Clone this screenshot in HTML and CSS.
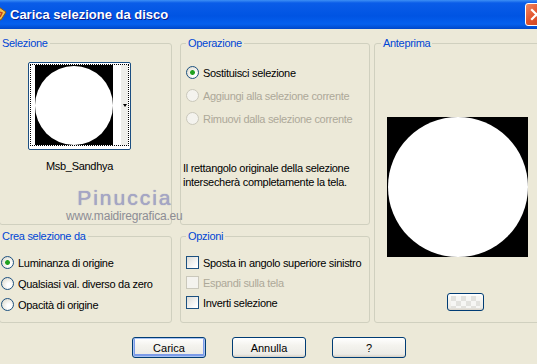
FILE: index.html
```html
<!DOCTYPE html>
<html lang="it">
<head>
    <meta charset="UTF-8">
    <title>Carica selezione da disco</title>
    <link rel="stylesheet" href="styles.css">
</head>
<body>
<div class="dialog">
    <div class="titlebar">
        <span class="app-icon">
            <svg width="16" height="16" viewBox="0 0 16 16">
                <path d="M2 3 L7 1 L14 6 L9 14 L3 12 Z" fill="#f3c04b" stroke="#8a5a12" stroke-width="1"/>
                <path d="M5 5 L10 7 L8 11" fill="none" stroke="#c6421c" stroke-width="1.5"/>
            </svg>
        </span>
        <span class="title">Carica selezione da disco</span>
        <span class="close">
            <svg width="21" height="21" viewBox="0 0 21 21">
                <path d="M6 6 L15 15 M15 6 L6 15" stroke="#fff" stroke-width="2.2" stroke-linecap="square"/>
            </svg>
        </span>
    </div>

    <div class="content">
        <div class="groups">
            <fieldset class="group sel-group">
                <legend>Selezione</legend>
                <div class="thumb-wrap">
                    <div class="thumb">
                        <div class="thumb-inner">
                            <div class="thumb-img"><div class="circle"></div></div>
                            <div class="thumb-strip"><span class="arrow"></span></div>
                        </div>
                    </div>
                    <div class="thumb-name">Msb_Sandhya</div>
                </div>
            </fieldset>

            <fieldset class="group op-group">
                <legend>Operazione</legend>
                <div class="rows op-rows">
                    <label class="row"><input type="radio" name="op" checked> Sostituisci selezione</label>
                    <label class="row disabled"><input type="radio" name="op" disabled> Aggiungi alla selezione corrente</label>
                    <label class="row disabled"><input type="radio" name="op" disabled> Rimuovi dalla selezione corrente</label>
                </div>
                <p class="note">Il rettangolo originale della selezione<br>intersecherà completamente la tela.</p>
            </fieldset>

            <fieldset class="group preview-group">
                <legend>Anteprima</legend>
                <div class="preview"><div class="circle"></div></div>
                <button class="btn small-btn"><span class="checker"></span></button>
            </fieldset>

            <fieldset class="group crea-group">
                <legend>Crea selezione da</legend>
                <div class="rows crea-rows">
                    <label class="row"><input type="radio" name="src" checked> Luminanza di origine</label>
                    <label class="row"><input type="radio" name="src"> Qualsiasi val. diverso da zero</label>
                    <label class="row"><input type="radio" name="src"> Opacità di origine</label>
                </div>
            </fieldset>

            <fieldset class="group opt-group">
                <legend>Opzioni</legend>
                <div class="rows opt-rows">
                    <label class="row"><input type="checkbox"> Sposta in angolo superiore sinistro</label>
                    <label class="row disabled"><input type="checkbox" disabled> Espandi sulla tela</label>
                    <label class="row"><input type="checkbox"> Inverti selezione</label>
                </div>
            </fieldset>

            <div class="watermark">
                <span class="wm-name">Pinuccia</span>
                <span class="wm-url">www.maidiregrafica.eu</span>
            </div>
        </div>

        <div class="buttons">
            <button class="btn default">Carica</button>
            <button class="btn">Annulla</button>
            <button class="btn">?</button>
        </div>
    </div>
</div>
</body>
</html>
```

FILE: styles.css
```css
body {
    margin: 0;
    background: #ece9d8;
    font-family: "Liberation Sans", Arial, sans-serif;
    font-size: 11px;
    letter-spacing: -0.3px;
    color: #000;
    overflow: hidden;
}
.dialog {
    width: 537px;
    height: 364px;
    overflow: hidden;
    position: relative;
}
.titlebar {
    height: 29px;
    display: flex;
    align-items: center;
    background: linear-gradient(#3d8ff5 0px, #0a5ce8 3px, #0054e3 16px, #0560ee 24px, #0047c9 29px);
}
.app-icon {
    margin-left: -8px;
    width: 16px;
    height: 16px;
    margin-top: -2px;
}
.title {
    margin-left: 2px;
    color: #fff;
    font-weight: bold;
    font-size: 13px;
    letter-spacing: 0;
    text-shadow: 1px 1px 0 #0a1a8a;
    flex: 1;
}
.close {
    width: 21px;
    height: 21px;
    margin-right: -11px;
    border: 1px solid #fff;
    border-radius: 3px;
    background: linear-gradient(135deg, #f08a66, #e2542d 45%, #c6401c);
    display: flex;
}

.content {
    padding-top: 7px;
}
.groups {
    position: relative;
    margin-left: -1px;
    display: grid;
    grid-template-columns: 173px 190px 175px;
    grid-template-rows: 189px 94px;
    column-gap: 8px;
    row-gap: 4px;
}
.preview-group {
    grid-column: 3;
    grid-row: 1 / 3;
    margin-left: -4px !important;
}
.group {
    margin: 0;
    padding: 0;
    border: 1px solid #d0d0bf;
    border-radius: 3px;
    min-width: 0;
}
.group legend {
    padding: 0 2px;
    line-height: 14px;
    color: #0046d5;
}
.op-group legend, .opt-group legend { margin-left: 5px; }
.preview-group legend { margin-left: 6px; }

/* selezione */
.thumb-wrap {
    margin: 12px 0 0 29px;
    width: 101px;
    display: flex;
    flex-direction: column;
    align-items: center;
}
.thumb {
    width: 99px;
    height: 84px;
    border: 1px solid #1c4f82;
    border-radius: 2px;
    padding: 1px;
    box-sizing: content-box;
    background: #fff;
}
.thumb-inner {
    height: 80px;
    border: 1px dotted #000;
    display: flex;
    padding-left: 4px;
    background: #fff;
}
.thumb-img {
    width: 78px;
    height: 80px;
    background: #000;
    display: flex;
    align-items: center;
    justify-content: center;
}
.thumb-img .circle {
    width: 78px;
    height: 79px;
}
.thumb-strip {
    flex: 1;
    display: flex;
    align-items: center;
    justify-content: flex-end;
    background: linear-gradient(to right, #fff 55%, #eeeeea 55%);
}
.arrow {
    width: 0;
    height: 0;
    border-left: 2px solid transparent;
    border-right: 2px solid transparent;
    border-top: 3px solid #000;
    margin-right: 1px;
}
.circle {
    background: #fff;
    border-radius: 50%;
}
.thumb-name {
    margin-top: 9px;
    line-height: 14px;
}

/* rows */
.rows {
    display: flex;
    flex-direction: column;
}
.row {
    display: flex;
    align-items: center;
    gap: 4px;
    height: 13px;
    white-space: nowrap;
}
.row.disabled { color: #aca899; }
.op-rows {
    padding: 16px 0 0 5px;
    gap: 10px;
}
.crea-rows {
    padding: 13px 0 0 1px;
    gap: 8px;
}
.opt-rows {
    padding: 13px 0 0 5px;
    gap: 7px;
}
input[type=radio], input[type=checkbox] {
    -webkit-appearance: none;
    appearance: none;
    margin: 0;
    width: 13px;
    height: 13px;
    box-sizing: border-box;
    border: 1px solid #1c5180;
    flex: none;
}
input[type=radio] {
    border-radius: 50%;
    background: radial-gradient(circle at 65% 65%, #fff 20%, #dcd9cb 90%);
}
input[type=radio]:checked {
    background: radial-gradient(circle, #21a121 0 2px, #a7dca7 2.5px, transparent 3px),
                radial-gradient(circle at 65% 65%, #fff 20%, #dcd9cb 90%);
}
input[type=checkbox] {
    background: linear-gradient(135deg, #dcdcd7, #fff 85%);
}
input:disabled {
    border-color: #cac8bb;
    background: #f4f3ee;
}

.note {
    margin: 36px 0 0 2px;
    line-height: 14px;
}

/* anteprima */
.preview {
    width: 141px;
    height: 140px;
    margin: 67px 0 0 12px;
    background: #000;
    display: flex;
    align-items: center;
    justify-content: center;
}
.preview .circle {
    width: 140px;
    height: 140px;
}
.small-btn {
    width: 37px !important;
    height: 18px !important;
    margin: 36px 0 0 72px;
    padding: 2px 3px !important;
}
.checker {
    display: block;
    width: 100%;
    height: 100%;
    background:
        repeating-conic-gradient(#f6f6f4 0 25%, #e2e2de 0 50%) 0 0 / 10px 10px;
}

.watermark {
    position: absolute;
    left: 67px;
    top: 151px;
    display: flex;
    flex-direction: column;
    align-items: flex-end;
    pointer-events: none;
    letter-spacing: 0;
}
.wm-name {
    font-size: 21px;
    color: #a5a6c6;
    letter-spacing: 2px;
    text-shadow: 0 0 1px #9090b0;
    line-height: 22px;
    margin-right: 10px;
}
.wm-url {
    font-size: 12px;
    color: #8d8d95;
    line-height: 14px;
    letter-spacing: -0.2px;
}

/* buttons */
.buttons {
    margin-top: 14px;
    display: flex;
    justify-content: center;
    gap: 26px;
    padding-left: 1px;
}
.btn {
    width: 74px;
    height: 21px;
    padding: 0;
    border: 1px solid #003c74;
    border-radius: 3px;
    background: linear-gradient(#fff, #f4f3ee 40%, #ecebe6 85%, #d6d0c5);
    font-family: "Liberation Sans", Arial, sans-serif;
    font-size: 11px;
    color: #000;
}
.btn.default {
    box-shadow: inset 0 0 0 1px #a9c3f2, inset 0 -1px 0 2px #7c9be8;
}
```
